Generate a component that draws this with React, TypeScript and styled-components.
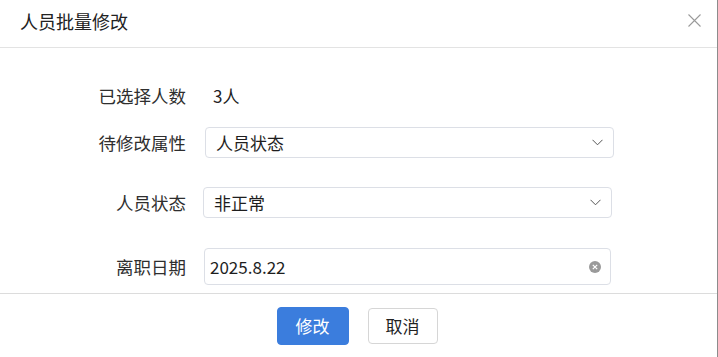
import React from "react";
import styled, { createGlobalStyle } from "styled-components";

const Global = createGlobalStyle`
  html, body { margin: 0; padding: 0; background: #fff; }
  body { font-family: "Noto Sans CJK SC", "Noto Sans", sans-serif; color: #333; }
  * { box-sizing: border-box; }
`;

const Dialog = styled.div`
  width: 718px;
  height: 357px;
  display: flex;
  flex-direction: column;
  background: #fff;
  border-right: 1px solid #8c8c8c;
`;

const Header = styled.div`
  height: 48px;
  flex: none;
  display: flex;
  align-items: flex-start;
  justify-content: space-between;
  padding: 8px 16px 0 20px;
  border-bottom: 1px solid #e3e3e3;
`;

const Title = styled.div`
  font-size: 18px;
  line-height: 26px;
  color: #222;
`;

const Close = styled.button`
  border: 0;
  background: none;
  padding: 0;
  margin-top: 5px;
  width: 14px;
  height: 14px;
  display: flex;
  align-items: center;
  justify-content: center;
  cursor: pointer;
`;

const Body = styled.div`
  flex: 1;
  padding-top: 33px;
  display: flex;
  flex-direction: column;
`;

const Row = styled.div<{ $gap: number; $h: number }>`
  display: flex;
  align-items: center;
  height: ${(p) => p.$h}px;
  margin-top: ${(p) => p.$gap}px;
`;

const Label = styled.div`
  width: 186px;
  flex: none;
  text-align: right;
  font-size: 17.5px;
  line-height: 24px;
  color: #2e2e2e;
`;

const Value = styled.div`
  margin-left: 27px;
  font-size: 17px;
  line-height: 24px;
  color: #222;
`;

const Field = styled.div<{ $left: number; $w: number; $pad: number }>`
  margin-left: ${(p) => p.$left}px;
  width: ${(p) => p.$w}px;
  height: 100%;
  border: 1px solid #dcdfe6;
  border-radius: 4px;
  display: flex;
  align-items: center;
  justify-content: space-between;
  padding: 0 10px 0 ${(p) => p.$pad}px;
  font-size: 17px;
  color: #1e1e1e;
  background: #fff;
`;

const ClearDot = styled.span`
  width: 12px;
  height: 12px;
  border-radius: 50%;
  background: #9a9a9a;
  display: flex;
  align-items: center;
  justify-content: center;
  margin-right: -1px;
`;

const Footer = styled.div`
  height: 64px;
  flex: none;
  border-top: 1px solid #dcdcdc;
  display: flex;
  justify-content: center;
  align-items: flex-start;
  gap: 19px;
  padding-top: 13px;
  padding-right: 3px;
`;

const Button = styled.button<{ $primary?: boolean }>`
  height: ${(p) => (p.$primary ? 38 : 36)}px;
  width: ${(p) => (p.$primary ? 72 : 70)}px;
  margin-top: ${(p) => (p.$primary ? 0 : 1)}px;
  border-radius: 4px;
  border: 1px solid ${(p) => (p.$primary ? "#3b7ddd" : "#d6d6d6")};
  background: ${(p) => (p.$primary ? "#3b7ddd" : "#fff")};
  color: ${(p) => (p.$primary ? "#fff" : "#222")};
  font-family: inherit;
  font-size: 17px;
  line-height: 24px;
  padding: 0;
  cursor: pointer;
`;

const Chevron = () => (
  <svg width="11" height="7" viewBox="0 0 11 7">
    <path d="M0.5 0.8 L5.5 5.8 L10.5 0.8" fill="none" stroke="#555" strokeWidth="1" />
  </svg>
);

export default function App() {
  return (
    <>
      <Global />
      <Dialog>
        <Header>
          <Title>人员批量修改</Title>
          <Close aria-label="close">
            <svg width="13" height="13" viewBox="0 0 13 13">
              <path d="M0.5 0.5 L12.5 12.5 M12.5 0.5 L0.5 12.5" stroke="#9a9a9a" strokeWidth="1.1" />
            </svg>
          </Close>
        </Header>
        <Body>
          <Row $gap={0} $h={30}>
            <Label>已选择人数</Label>
            <Value>3人</Value>
          </Row>
          <Row $gap={16} $h={31}>
            <Label>待修改属性</Label>
            <Field $left={19} $w={409} $pad={10}>
              <span>人员状态</span>
              <Chevron />
            </Field>
          </Row>
          <Row $gap={29} $h={31}>
            <Label>人员状态</Label>
            <Field $left={17} $w={409} $pad={10}>
              <span>非正常</span>
              <Chevron />
            </Field>
          </Row>
          <Row $gap={30} $h={37}>
            <Label>离职日期</Label>
            <Field $left={18} $w={407} $pad={5}>
              <span>2025.8.22</span>
              <ClearDot>
                <svg width="6" height="6" viewBox="0 0 6 6">
                  <path d="M0.8 0.8 L5.2 5.2 M5.2 0.8 L0.8 5.2" stroke="#fff" strokeWidth="1.2" />
                </svg>
              </ClearDot>
            </Field>
          </Row>
        </Body>
        <Footer>
          <Button $primary>修改</Button>
          <Button>取消</Button>
        </Footer>
      </Dialog>
    </>
  );
}
